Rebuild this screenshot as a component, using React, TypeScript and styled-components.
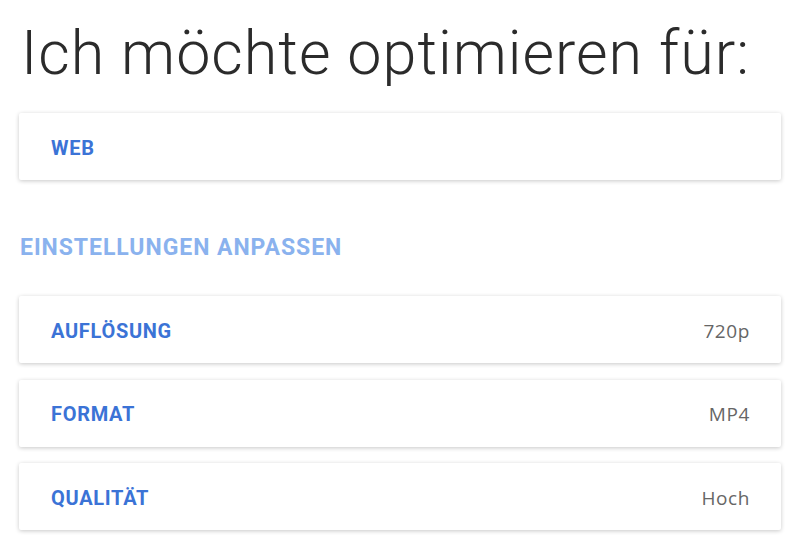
import React from "react";
import styled, { createGlobalStyle } from "styled-components";

const Global = createGlobalStyle`
  html, body { margin: 0; padding: 0; background: #ffffff; }
  body { font-family: Roboto, "Noto Sans", sans-serif; }
`;

const Page = styled.div`
  width: 800px;
  height: 546px;
  box-sizing: border-box;
  padding: 0 19px 0 19px;
  display: flex;
  flex-direction: column;
  overflow: hidden;
`;

const Title = styled.h1`
  margin: 18px 0 0 2px;
  font-family: Roboto, sans-serif;
  font-weight: 300;
  font-size: 61px;
  line-height: 70px;
  color: #2b2b2b;
  letter-spacing: 1px;
  white-space: nowrap;
`;

const Card = styled.div`
  height: 67px;
  box-sizing: border-box;
  padding: 0 31px 0 32px;
  display: flex;
  align-items: center;
  justify-content: space-between;
  background: #fff;
  box-shadow: 0 1px 4px rgba(0, 0, 0, 0.22);
  border-radius: 2px;
`;

const Label = styled.span`
  font-family: Roboto, sans-serif;
  font-weight: 700;
  font-size: 20px;
  color: #3b73d6;
  letter-spacing: 0.7px;
  padding-top: 2px;
`;

const Value = styled.span`
  font-family: "Open Sans", sans-serif;
  font-weight: 400;
  font-size: 19px;
  color: #666666;
  letter-spacing: 0.6px;
  padding-top: 2px;
`;

const SectionTitle = styled.h2`
  margin: 56px 0 36px 1px;
  font-family: Roboto, sans-serif;
  font-weight: 700;
  font-size: 23px;
  line-height: 24px;
  color: #8ab2ee;
  letter-spacing: 0.95px;
`;

const List = styled.div`
  display: flex;
  flex-direction: column;
  gap: 16.5px;
`;

const FirstCard = styled(Card)`
  margin-top: 25px;
`;

const settings = [
  { label: "AUFLÖSUNG", value: "720p" },
  { label: "FORMAT", value: "MP4" },
  { label: "QUALITÄT", value: "Hoch" },
];

export default function App() {
  return (
    <>
      <Global />
      <Page>
        <Title>Ich möchte optimieren für:</Title>
        <FirstCard>
          <Label>WEB</Label>
        </FirstCard>
        <SectionTitle>EINSTELLUNGEN ANPASSEN</SectionTitle>
        <List>
          {settings.map((s) => (
            <Card key={s.label}>
              <Label>{s.label}</Label>
              <Value>{s.value}</Value>
            </Card>
          ))}
        </List>
      </Page>
    </>
  );
}
